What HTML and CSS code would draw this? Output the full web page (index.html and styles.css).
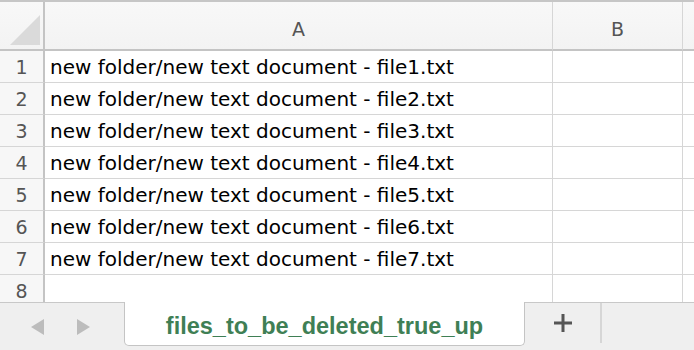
FILE: index.html
```html
<!DOCTYPE html>
<html lang="en">
<head>
    <meta charset="UTF-8">
    <title>files_to_be_deleted_true_up</title>
    <link rel="stylesheet" href="styles.css">
</head>
<body>
    <div class="sheet">
        <div class="grid">
            <div class="corner"><span class="corner-mark"></span></div>
            <div class="col-head">A</div>
            <div class="col-head">B</div>
            <div class="col-head rest"></div>

            <div class="row-head">1</div><div class="cell">new folder/new text document - file1.txt</div><div class="cell"></div><div class="cell rest"></div>
            <div class="row-head">2</div><div class="cell">new folder/new text document - file2.txt</div><div class="cell"></div><div class="cell rest"></div>
            <div class="row-head">3</div><div class="cell">new folder/new text document - file3.txt</div><div class="cell"></div><div class="cell rest"></div>
            <div class="row-head">4</div><div class="cell">new folder/new text document - file4.txt</div><div class="cell"></div><div class="cell rest"></div>
            <div class="row-head">5</div><div class="cell">new folder/new text document - file5.txt</div><div class="cell"></div><div class="cell rest"></div>
            <div class="row-head">6</div><div class="cell">new folder/new text document - file6.txt</div><div class="cell"></div><div class="cell rest"></div>
            <div class="row-head">7</div><div class="cell">new folder/new text document - file7.txt</div><div class="cell"></div><div class="cell rest"></div>
            <div class="row-head">8</div><div class="cell"></div><div class="cell"></div><div class="cell rest"></div>
        </div>

        <div class="tab-bar">
            <div class="nav">
                <span class="arrow left"></span>
                <span class="arrow right"></span>
            </div>
            <div class="tab">files_to_be_deleted_true_up</div>
            <div class="add">
                <svg width="22" height="22" viewBox="0 0 22 22">
                    <path d="M11 2v18M2 11h18" stroke="#555" stroke-width="3"/>
                </svg>
            </div>
            <div class="tab-fill"></div>
        </div>
    </div>
</body>
</html>
```

FILE: styles.css
```css
body {
    margin: 0;
    font-family: "DejaVu Sans", Verdana, sans-serif;
    background: #fff;
}

.sheet {
    width: 694px;
    height: 350px;
    overflow: hidden;
    position: relative;
}

.grid {
    display: grid;
    grid-template-columns: 45px 508px 130px 11px;
    grid-template-rows: 49px repeat(8, 32px);
    border-top: 2px solid #c6c6c6;
}

.corner,
.col-head {
    background: linear-gradient(#f8f8f8, #f3f3f3);
    border-right: 1px solid #d6d6d6;
    border-bottom: 2px solid #c4c4c4;
    box-sizing: border-box;
}

.corner {
    position: relative;
    border-right: 2px solid #c4c4c4;
}

.corner-mark {
    position: absolute;
    left: 10px;
    top: 13px;
    width: 0;
    height: 0;
    border-left: 30px solid transparent;
    border-bottom: 30px solid #dadada;
}

.col-head {
    display: flex;
    align-items: center;
    justify-content: center;
    color: #555;
    font-size: 19px;
    padding-top: 6px;
}

.row-head {
    background: #f7f7f7;
    border-right: 2px solid #c4c4c4;
    border-bottom: 1px solid #d6d6d6;
    box-sizing: border-box;
    display: flex;
    align-items: center;
    justify-content: center;
    color: #555;
    font-size: 19px;
}

.cell {
    border-right: 1px solid #d6d6d6;
    border-bottom: 1px solid #d6d6d6;
    box-sizing: border-box;
    display: flex;
    align-items: center;
    padding-left: 5px;
    font-size: 20px;
    color: #000;
    white-space: nowrap;
}

.rest {
    border-right: none;
}

.tab-bar {
    position: absolute;
    left: 0;
    top: 302px;
    width: 694px;
    height: 48px;
    background: #efefef;
    border-top: 1px solid #c8c8c8;
    display: flex;
    box-sizing: border-box;
}

.nav {
    width: 124px;
    display: flex;
    align-items: center;
    gap: 33px;
    padding-left: 31px;
    box-sizing: border-box;
}

.arrow {
    width: 0;
    height: 0;
    border-top: 8px solid transparent;
    border-bottom: 8px solid transparent;
}

.arrow.left {
    border-right: 13px solid #bcbcbc;
}

.arrow.right {
    border-left: 13px solid #bcbcbc;
}

.tab {
    width: 401px;
    height: 44px;
    margin-top: -1px;
    background: #fff;
    border: 1px solid #c4c4c4;
    border-top: none;
    border-radius: 0 0 5px 5px;
    box-sizing: border-box;
    display: flex;
    align-items: center;
    justify-content: center;
    color: #3f7f55;
    font-family: "Liberation Sans", Arial, sans-serif;
    font-weight: bold;
    font-size: 23.5px;
    padding-top: 6px;
}

.add {
    width: 77px;
    height: 40px;
    border-right: 2px solid #d6d6d6;
    display: flex;
    align-items: center;
    justify-content: center;
    box-sizing: border-box;
}

.tab-fill {
    flex: 1;
}
```
